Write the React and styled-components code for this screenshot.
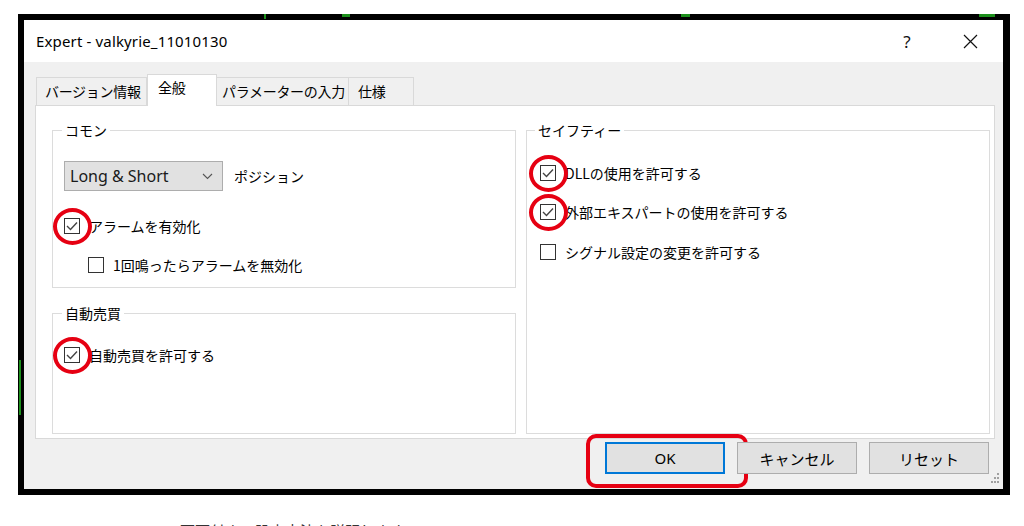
import React from 'react';
import styled, { createGlobalStyle } from 'styled-components';

const JP = `"Noto Sans CJK JP", "Noto Sans", sans-serif`;
const LATIN = `"Noto Sans", "Noto Sans CJK JP", sans-serif`;

const Global = createGlobalStyle`
  html, body { margin: 0; padding: 0; background: #fff; height: 526px; overflow: hidden; }
  body { font-family: ${JP}; color: #000; }
  * { box-sizing: border-box; }
`;

const Page = styled.div`
  width: 1024px;
  height: 526px;
  padding: 14px 0 0 18px;
  position: relative;
`;

const Frame = styled.div`
  width: 992px;
  height: 481px;
  border-style: solid;
  border-color: #000;
  border-width: 6px 7px 6px 6px;
  position: relative;
`;

const ChartBit = styled.span`
  position: absolute;
  background: #1b8f1b;
`;

const Dialog = styled.div`
  width: 100%;
  height: 100%;
  display: flex;
  flex-direction: column;
  position: relative;
  background: #f0f0f0;
`;

const TitleBar = styled.div`
  height: 42px;
  background: #fff;
  display: flex;
  align-items: center;
  padding: 0 10px 0 12px;
`;

const Title = styled.div`
  flex: 1;
  font-family: ${LATIN};
  font-size: 15px;
  letter-spacing: 0.15px;
`;

const TitleActions = styled.div`
  display: flex;
  gap: 17px;
  height: 100%;
`;

const TitleButton = styled.div`
  width: 46px;
  height: 100%;
  display: flex;
  align-items: center;
  justify-content: center;
  font-family: ${LATIN};
  font-size: 17px;
  color: #111;
`;

const Body = styled.div`
  flex: 1;
  display: flex;
  flex-direction: column;
  padding: 12px 8px 0 11px;
`;

const TabRow = styled.div`
  height: 31px;
  display: flex;
  align-items: flex-end;
  padding-left: 1px;
  position: relative;
  z-index: 1;
`;

const Tab = styled.div`
  width: ${p => p.$w}px;
  height: ${p => (p.$active ? 32 : 28)}px;
  margin-bottom: ${p => (p.$active ? -1 : 0)}px;
  padding-left: ${p => p.$pad}px;
  padding-top: ${p => (p.$active ? 2 : 3)}px;
  background: ${p => (p.$active ? '#fff' : '#f0f0f0')};
  border: 1px solid #d9d9d9;
  border-bottom: none;
  ${p => (p.$active ? '' : 'border-left-width: 0;')}
  ${p => (p.$first ? 'border-left-width: 1px;' : '')}
  font-size: 14px;
  line-height: 20px;
  letter-spacing: -0.3px;
  white-space: nowrap;
  overflow: hidden;
  color: #000;
`;

const Panel = styled.div`
  height: 334px;
  background: #fff;
  border: 1px solid #d9d9d9;
  display: grid;
  grid-template-columns: 464px 464px;
  column-gap: 10px;
  padding: 14px 4px 4px 16px;
`;

const Column = styled.div`
  display: flex;
  flex-direction: column;
  gap: 15px;
`;

const Group = styled.fieldset`
  margin: 0;
  min-width: 0;
  border: 1px solid #dcdcdc;
  padding: 0 0 12px ${p => p.$inset || 11}px;
  display: flex;
  flex-direction: column;
  flex: ${p => (p.$grow ? 1 : 'none')};
`;

const Legend = styled.legend`
  padding: 0 3px;
  margin-left: ${p => p.$shift || -2}px;
  font-size: 14px;
  line-height: 20px;
  color: #000;
`;

const SelectRow = styled.div`
  display: flex;
  align-items: center;
  gap: 11px;
  margin-top: 21px;
`;

const Select = styled.div`
  width: 159px;
  height: 30px;
  background: #e1e1e1;
  border: 1px solid #adadad;
  display: flex;
  align-items: center;
  justify-content: space-between;
  padding: 0 9px 0 5px;
  font-family: ${LATIN};
  font-size: 16px;
  color: #1a1a1a;
`;

const FieldLabel = styled.span`
  font-size: 14px;
`;

const CheckRow = styled.label`
  display: flex;
  align-items: center;
  height: 20px;
  gap: 9px;
  margin-top: ${p => p.$mt}px;
  margin-left: ${p => p.$indent || 0}px;
  font-size: 14px;
  color: #000;
  white-space: nowrap;
`;

const Box = styled.span`
  width: 16px;
  height: 16px;
  border: 1px solid #333;
  background: #fff;
  position: relative;
  flex: none;
  display: flex;
  align-items: center;
  justify-content: center;
`;

const Ring = styled.span`
  position: absolute;
  left: -12px;
  top: -11px;
  width: 39px;
  height: 37px;
  border: 4px solid #e60012;
  border-radius: 50%;
`;

const Footer = styled.div`
  display: flex;
  justify-content: flex-end;
  gap: 12px;
  margin-top: 3px;
  padding-right: 6px;
`;

const Button = styled.div`
  width: 120px;
  height: 32px;
  background: #e1e1e1;
  border: ${p => (p.$default ? '2px solid #0078d7' : '1px solid #adadad')};
  display: flex;
  align-items: center;
  justify-content: center;
  font-family: ${p => (p.$latin ? LATIN : JP)};
  font-size: 15px;
  color: #000;
  position: relative;
`;

const Highlight = styled.span`
  position: absolute;
  left: -21px;
  top: -10px;
  width: 162px;
  height: 54px;
  border: 4px solid #e60012;
  border-radius: 10px;
`;

const Grip = styled.svg`
  position: absolute;
  right: 3px;
  bottom: 5px;
`;

const Caption = styled.div`
  margin: 25px 0 0 162px;
  font-size: 15px;
  color: #333;
  letter-spacing: 0px;
`;

const Check = () => (
  <svg width="12" height="10" viewBox="0 0 12 10">
    <polyline points="1,5 4.5,8.5 11,1.5" fill="none" stroke="#444" strokeWidth="1.4" />
  </svg>
);

const CheckItem = ({ checked, ring, children, mt, indent }) => (
  <CheckRow $mt={mt} $indent={indent}>
    <Box>
      {checked && <Check />}
      {ring && <Ring />}
    </Box>
    {children}
  </CheckRow>
);

const tabs = [
  { label: 'バージョン情報', w: 111, pad: 8 },
  { label: '全般', w: 70, pad: 10, active: true },
  { label: 'パラメーターの入力', w: 132, pad: 5 },
  { label: '仕様', w: 65, pad: 9 },
];

export default function App() {
  return (
    <>
      <Global />
      <Page>
        <Frame>
          <ChartBit style={{ left: 240, top: -6, width: 2, height: 5 }} />
          <ChartBit style={{ left: 318, top: -6, width: 8, height: 3 }} />
          <ChartBit style={{ left: 657, top: -6, width: 9, height: 3 }} />
          <ChartBit style={{ left: 955, top: -6, width: 16, height: 3 }} />
          <ChartBit style={{ left: -5, top: 340, width: 2, height: 55 }} />
          <Dialog>
            <TitleBar>
              <Title>Expert - valkyrie_11010130</Title>
              <TitleActions>
                <TitleButton>?</TitleButton>
                <TitleButton>
                  <svg width="15" height="15" viewBox="0 0 15 15">
                    <path d="M1 1 L14 14 M14 1 L1 14" stroke="#111" strokeWidth="1.2" />
                  </svg>
                </TitleButton>
              </TitleActions>
            </TitleBar>
            <Body>
              <TabRow>
                {tabs.map((t, i) => (
                  <Tab key={t.label} $w={t.w} $pad={t.pad} $active={t.active} $first={i === 0}>
                    {t.label}
                  </Tab>
                ))}
              </TabRow>
              <Panel>
                <Column>
                  <Group>
                    <Legend>コモン</Legend>
                    <SelectRow>
                      <Select>
                        <span>Long &amp; Short</span>
                        <svg width="11" height="7" viewBox="0 0 11 7">
                          <polyline points="1,1 5.5,5.5 10,1" fill="none" stroke="#555" strokeWidth="1.1" />
                        </svg>
                      </Select>
                      <FieldLabel>ポジション</FieldLabel>
                    </SelectRow>
                    <CheckItem checked ring mt={25}>アラームを有効化</CheckItem>
                    <CheckItem mt={19} indent={24}>1回鳴ったらアラームを無効化</CheckItem>
                  </Group>
                  <Group $grow>
                    <Legend>自動売買</Legend>
                    <CheckItem checked ring mt={22}>自動売買を許可する</CheckItem>
                  </Group>
                </Column>
                <Group $inset={13} $grow>
                  <Legend $shift={-5}>セイフティー</Legend>
                  <CheckItem checked ring mt={23}>DLLの使用を許可する</CheckItem>
                  <CheckItem checked ring mt={19}>外部エキスパートの使用を許可する</CheckItem>
                  <CheckItem mt={20}>シグナル設定の変更を許可する</CheckItem>
                </Group>
              </Panel>
              <Footer>
                <Button $default $latin>
                  OK
                  <Highlight />
                </Button>
                <Button>キャンセル</Button>
                <Button>リセット</Button>
              </Footer>
            </Body>
            <Grip width="10" height="11" viewBox="0 0 10 11">
              <g fill="#a0a0a0">
                <rect x="7" y="0" width="2" height="2" />
                <rect x="4" y="4" width="2" height="2" />
                <rect x="7" y="4" width="2" height="2" />
                <rect x="1" y="8" width="2" height="2" />
                <rect x="4" y="8" width="2" height="2" />
                <rect x="7" y="8" width="2" height="2" />
              </g>
            </Grip>
          </Dialog>
        </Frame>
        <Caption>画面付きで設定方法を説明します</Caption>
      </Page>
    </>
  );
}
